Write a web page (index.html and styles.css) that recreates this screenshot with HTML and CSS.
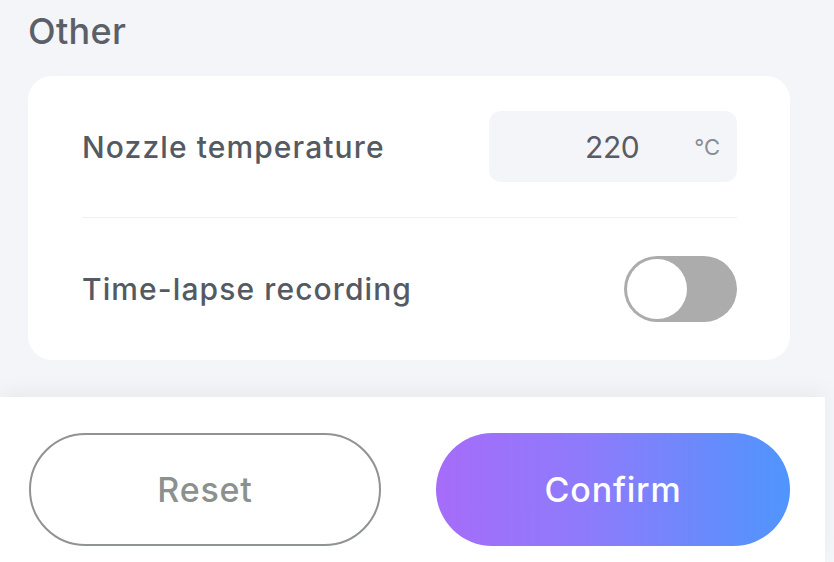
FILE: index.html
```html
<!DOCTYPE html>
<html>
<head>
<meta charset="utf-8">
<link rel="stylesheet" href="styles.css">
</head>
<body>
<div class="page">
  <h2 class="section-title">Other</h2>
  <div class="card">
    <div class="row row-first">
      <span class="label">Nozzle temperature</span>
      <div class="input-box">
        <span class="value">220</span>
        <span class="unit">°C</span>
      </div>
    </div>
    <div class="divider"></div>
    <div class="row row-second">
      <span class="label">Time-lapse recording</span>
      <div class="toggle"><div class="knob"></div></div>
    </div>
  </div>
  <div class="spacer"></div>
  <div class="footer">
    <button class="btn btn-reset">Reset</button>
    <button class="btn btn-confirm">Confirm</button>
  </div>
</div>
</body>
</html>
```

FILE: styles.css
```css
html, body {
  margin: 0;
  padding: 0;
  background: #f4f5f9;
  font-family: Inter, "Open Sans", sans-serif;
}
.page {
  width: 834px;
  height: 562px;
  overflow: hidden;
  display: flex;
  flex-direction: column;
}
.section-title {
  margin: 0;
  padding: 9px 0 0 28px;
  height: 76px;
  box-sizing: border-box;
  font-size: 36px;
  font-weight: 500;
  letter-spacing: 0.3px;
  color: #5b6068;
  line-height: 44px;
}
.card {
  margin: 0 44px 0 28px;
  background: #ffffff;
  border-radius: 24px;
  padding: 0 53px 0 54px;
}
.row {
  display: flex;
  align-items: center;
  justify-content: space-between;
}
.row-first {
  padding: 35px 0;
}
.row-second {
  padding: 38px 0 38px;
}
.label {
  font-size: 30px;
  font-weight: 500;
  letter-spacing: 1.1px;
  color: #555a62;
  line-height: 36px;
}
.input-box {
  width: 248px;
  height: 71px;
  background: #f4f5f9;
  border-radius: 12px;
  display: flex;
  align-items: center;
  justify-content: flex-end;
  box-sizing: border-box;
  padding-right: 17px;
}
.value {
  font-size: 30px;
  color: #595d63;
  margin-right: 55px;
  letter-spacing: -0.5px;
}
.unit {
  font-size: 22px;
  color: #8a8e93;
}
.divider {
  height: 1px;
  background: #eff0f3;
}
.toggle {
  width: 113px;
  height: 66px;
  border-radius: 33px;
  background: #acacac;
  display: flex;
  align-items: center;
  padding: 3px;
  box-sizing: border-box;
}
.knob {
  width: 60px;
  height: 60px;
  border-radius: 50%;
  background: #ffffff;
}
.spacer {
  height: 37px;
}
.footer {
  width: 825px;
  flex: 1;
  background: #ffffff;
  box-shadow: 0 -8px 18px rgba(0, 0, 0, 0.04);
  display: flex;
  gap: 55px;
  padding: 36px 0 0 29px;
  box-sizing: border-box;
}
.btn {
  height: 113px;
  border-radius: 57px;
  font-family: Inter, "Open Sans", sans-serif;
  font-size: 34px;
  font-weight: 500;
  letter-spacing: 0.8px;
  cursor: pointer;
}
.btn-reset {
  width: 352px;
  background: #ffffff;
  border: 2px solid #8f9391;
  color: #8b918e;
}
.btn-confirm {
  width: 354px;
  border: none;
  color: #ffffff;
  background: linear-gradient(90deg, #a66cf9 0%, #8c7cfb 45%, #4f95fd 100%);
}
```
